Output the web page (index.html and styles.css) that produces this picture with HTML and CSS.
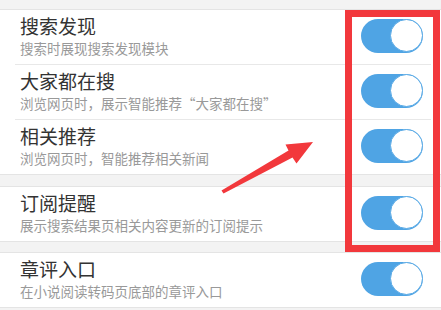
FILE: index.html
```html
<!DOCTYPE html>
<html lang="zh-CN">
<head>
    <meta charset="UTF-8">
    <title>搜索设置</title>
    <link rel="stylesheet" href="styles.css">
</head>
<body>
    <div class="group">
        <div class="row">
            <div class="text">
                <div class="title">搜索发现</div>
                <div class="desc">搜索时展现搜索发现模块</div>
            </div>
            <span class="switch on"><span class="knob"></span></span>
        </div>
        <div class="row">
            <div class="text">
                <div class="title">大家都在搜</div>
                <div class="desc">浏览网页时，展示智能推荐“大家都在搜”</div>
            </div>
            <span class="switch on"><span class="knob"></span></span>
        </div>
        <div class="row">
            <div class="text">
                <div class="title">相关推荐</div>
                <div class="desc">浏览网页时，智能推荐相关新闻</div>
            </div>
            <span class="switch on"><span class="knob"></span></span>
        </div>
    </div>

    <div class="group">
        <div class="row">
            <div class="text">
                <div class="title">订阅提醒</div>
                <div class="desc">展示搜索结果页相关内容更新的订阅提示</div>
            </div>
            <span class="switch on"><span class="knob"></span></span>
        </div>
    </div>

    <div class="group">
        <div class="row">
            <div class="text">
                <div class="title">章评入口</div>
                <div class="desc">在小说阅读转码页底部的章评入口</div>
            </div>
            <span class="switch on"><span class="knob"></span></span>
        </div>
    </div>

    <!-- 标注 -->
    <div class="mark-box"></div>
    <svg class="mark-arrow" width="441" height="310" viewBox="0 0 441 310">
        <polygon points="221.5,190.5 288.5,150.5 285.5,144.5 313,142 296.5,163.5 292.5,157.5 223.5,193.5" fill="#f2383c"/>
    </svg>
</body>
</html>
```

FILE: styles.css
```css
body {
    margin: 0;
    padding-top: 9px;
    background-color: #f3f3f3;
    font-family: "Noto Sans CJK SC", "Noto Sans", sans-serif;
    overflow: hidden;
}
.group {
    background-color: #fff;
    border-top: 1px solid #e4e4e4;
    border-bottom: 1px solid #e4e4e4;
    margin-bottom: 10px;
}
.group:first-child {
    margin-bottom: 11px;
}
.row {
    display: flex;
    align-items: center;
    height: 54px;
    padding: 0 18px 0 20px;
    position: relative;
}
.row + .row {
    border-top: 1px solid #e8e8e8;
    margin-left: 15px;
    margin-right: 10px;
    padding-left: 5px;
    padding-right: 8px;
}
.text {
    flex: 1;
    margin-top: -2px;
}
.title {
    font-size: 19px;
    line-height: 22px;
    color: #333;
}
.desc {
    font-size: 13.5px;
    line-height: 18px;
    color: #999;
    margin-top: 2px;
    white-space: nowrap;
}
.switch {
    display: block;
    width: 62px;
    height: 34px;
    border-radius: 17px;
    background-color: #4fa4e4;
    position: relative;
    margin-top: -3px;
}
.knob {
    position: absolute;
    right: 0;
    top: 0;
    width: 31px;
    height: 31px;
    border-radius: 50%;
    background-color: #fff;
    border: 1.5px solid #5aaae6;
}
.mark-box {
    position: absolute;
    left: 345px;
    top: 10px;
    width: 81px;
    height: 228px;
    border: 7px solid #f2383c;
}
.mark-arrow {
    position: absolute;
    left: 0;
    top: 0;
}
```
